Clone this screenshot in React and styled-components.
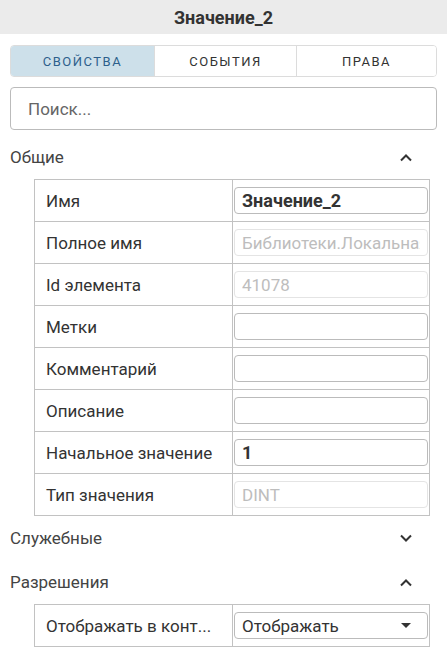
import React from 'react'
import styled, { createGlobalStyle } from 'styled-components'

const GlobalStyle = createGlobalStyle`
  body {
    margin: 0;
    background: #fff;
    font-family: Roboto, 'Noto Sans', sans-serif;
    color: #333;
  }
`

const general = [
  { label: 'Имя', value: 'Значение_2', bold: true },
  { label: 'Полное имя', value: 'Библиотеки.Локальная', disabled: true },
  { label: 'Id элемента', value: '41078', disabled: true },
  { label: 'Метки', value: '' },
  { label: 'Комментарий', value: '' },
  { label: 'Описание', value: '' },
  { label: 'Начальное значение', value: '1', bold: true },
  { label: 'Тип значения', value: 'DINT', disabled: true },
]

const Chevron = ({ up }) => (
  <svg width="14" height="9" viewBox="0 0 14 9">
    <path
      d={up ? 'M2 7.5 L7 2.5 L12 7.5' : 'M2 1.5 L7 6.5 L12 1.5'}
      fill="none"
      stroke="#333"
      strokeWidth="2"
    />
  </svg>
)

function Section({ title, open, children }) {
  return (
    <>
      <SectionHead>
        <span>{title}</span>
        <Chevron up={open} />
      </SectionHead>
      {open && <Table>{children}</Table>}
    </>
  )
}

export default function App() {
  return (
    <Panel>
      <GlobalStyle />
      <Header>Значение_2</Header>
      <Body>
        <Tabs>
          <Tab active>Свойства</Tab>
          <Tab>События</Tab>
          <Tab>Права</Tab>
        </Tabs>
        <Search placeholder="Поиск..." />

        <Section title="Общие" open>
          {general.map(row => (
            <React.Fragment key={row.label}>
              <Label>{row.label}</Label>
              <Cell>
                <Field
                  defaultValue={row.value}
                  $bold={row.bold}
                  disabled={row.disabled}
                />
              </Cell>
            </React.Fragment>
          ))}
        </Section>

        <Section title="Служебные" />

        <Section title="Разрешения" open>
          <Label>Отображать в конт...</Label>
          <Cell>
            <Select>
              <span>Отображать</span>
              <Caret />
            </Select>
          </Cell>
        </Section>
      </Body>
    </Panel>
  )
}

const Panel = styled.div`
  width: 447px;
  min-height: 651px;
`

const Header = styled.div`
  height: 34px;
  background: #ebebeb;
  display: flex;
  align-items: center;
  justify-content: center;
  font-size: 18px;
  font-weight: 700;
  color: #333;
`

const Body = styled.div`
  padding: 11px 10px 0;
  display: flex;
  flex-direction: column;
`

const Tabs = styled.div`
  display: grid;
  grid-template-columns: 143px 142px 1fr;
  height: 32px;
  border: 1px solid #dcdcdc;
  border-radius: 4px;
  overflow: hidden;
  box-sizing: border-box;
`

const Tab = styled.div`
  display: flex;
  align-items: center;
  justify-content: center;
  font-size: 13px;
  font-weight: 400;
  letter-spacing: 1.5px;
  text-transform: uppercase;
  color: ${p => (p.active ? '#2d5f8c' : '#333')};
  background: ${p => (p.active ? '#cde0ea' : '#fff')};
  & + & {
    border-left: 1px solid #dcdcdc;
  }
`

const Search = styled.input`
  margin: 10px 0 5px;
  height: 43px;
  box-sizing: border-box;
  border: 1px solid #bbb;
  border-radius: 4px;
  padding: 0 17px;
  font-family: inherit;
  font-size: 17px;
  color: #333;
  outline: none;
  &::placeholder {
    color: #666;
  }
`

const SectionHead = styled.div`
  height: 44px;
  display: flex;
  align-items: center;
  justify-content: space-between;
  padding-right: 24px;
  font-size: 17px;
  color: #444;
  box-sizing: border-box;
`

const Table = styled.div`
  margin: 0 7px 0 24px;
  display: grid;
  grid-template-columns: 198px 1fr;
  border-top: 1px solid #c2c2c2;
  border-left: 1px solid #c2c2c2;
`

const Label = styled.div`
  height: 42px;
  box-sizing: border-box;
  display: flex;
  align-items: center;
  padding-left: 11px;
  font-size: 17px;
  color: #333;
  border-right: 1px solid #c2c2c2;
  border-bottom: 1px solid #c2c2c2;
  white-space: nowrap;
`

const Cell = styled.div`
  height: 42px;
  box-sizing: border-box;
  display: flex;
  align-items: center;
  padding: 0 1px;
  border-right: 1px solid #c2c2c2;
  border-bottom: 1px solid #c2c2c2;
  min-width: 0;
`

const Field = styled.input`
  width: 100%;
  min-width: 0;
  height: 27px;
  box-sizing: border-box;
  border: 1px solid #bbb;
  border-radius: 4px;
  padding: 0 7px;
  font-family: inherit;
  font-size: ${p => (p.$bold ? 18 : 17)}px;
  font-weight: ${p => (p.$bold ? 700 : 400)};
  color: #333;
  background: #fff;
  outline: none;
  &:disabled {
    border-color: #e4e4e4;
    color: #bdbdbd;
  }
`

const Select = styled.div`
  width: 100%;
  height: 27px;
  box-sizing: border-box;
  border: 1px solid #bbb;
  border-radius: 4px;
  padding: 0 16px 0 7px;
  display: flex;
  align-items: center;
  justify-content: space-between;
  font-size: 17px;
  color: #333;
`

const Caret = styled.span`
  width: 0;
  height: 0;
  border-left: 5px solid transparent;
  border-right: 5px solid transparent;
  border-top: 5px solid #333;
`
